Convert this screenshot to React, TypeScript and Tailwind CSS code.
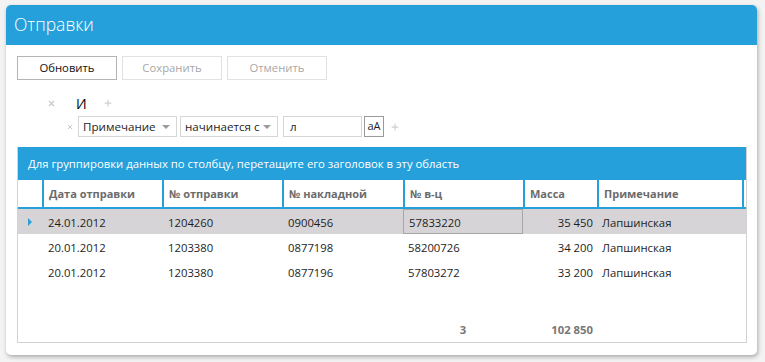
import { Plus, X } from "lucide-react"

const columns = [
  { id: "date", title: "Дата отправки" },
  { id: "num", title: "№ отправки" },
  { id: "invoice", title: "№ накладной" },
  { id: "wagon", title: "№ в-ц" },
  { id: "mass", title: "Масса", right: true },
  { id: "note", title: "Примечание" },
]

const rows = [
  { date: "24.01.2012", num: "1204260", invoice: "0900456", wagon: "57833220", mass: "35 450", note: "Лапшинская" },
  { date: "20.01.2012", num: "1203380", invoice: "0877198", wagon: "58200726", mass: "34 200", note: "Лапшинская" },
  { date: "20.01.2012", num: "1203380", invoice: "0877196", wagon: "57803272", mass: "33 200", note: "Лапшинская" },
]

const gridCols = "grid grid-cols-[24px_120px_120px_121px_120px_74px_145px_1fr]"

function Dropdown({ label, width }: { label: string; width: string }) {
  return (
    <div className={`${width} h-[21px] border border-[#d6d6d6] bg-white flex items-center justify-between pl-[4px] pr-[6px] whitespace-nowrap`}>
      <span>{label}</span>
      <span className="w-0 h-0 border-l-[4px] border-r-[4px] border-t-[4px] border-l-transparent border-r-transparent border-t-[#9a9a9a]" />
    </div>
  )
}

export default function App() {
  return (
    <div className="w-[765px] h-[362px] bg-[#f3f3f3] pt-[5px] pl-[6px] font-['Open_Sans',sans-serif] text-[11.3px] text-[#1e1e1e]">
      <div className="w-[751px] h-[350px] bg-white rounded-[5px] shadow-[1px_2px_4px_rgba(0,0,0,0.3)] overflow-hidden flex flex-col">
        {/* Header */}
        <div className="h-[40px] bg-[#25a0da] text-white text-[17.5px] font-light flex items-center pl-[8px] pb-[1px]">
          Отправки
        </div>

        <div className="flex-1 flex flex-col pl-[11px]">
          {/* Toolbar */}
          <div className="flex gap-[5px] mt-[11px]">
            <button className="w-[100px] h-[24px] border border-[#b4b4b4] bg-white text-[#111]">Обновить</button>
            <button className="w-[100px] h-[24px] border border-[#e2e2e2] bg-white text-[#a8a8a8]">Сохранить</button>
            <button className="w-[100px] h-[24px] border border-[#e2e2e2] bg-white text-[#a8a8a8]">Отменить</button>
          </div>

          {/* Filter */}
          <div className="flex items-center h-[16px] mt-[15px] pl-[30px]">
            <X className="w-[9px] h-[9px] text-[#c8c8c8]" strokeWidth={3} />
            <span className="ml-[20px] text-[14px] font-medium text-black">И</span>
            <Plus className="ml-[16px] w-[10px] h-[10px] text-[#d0d0d0]" strokeWidth={3} />
          </div>
          <div className="flex items-center mt-[5px] pl-[49px] text-[11.6px]">
            <X className="w-[8px] h-[8px] text-[#c8c8c8]" strokeWidth={3} />
            <div className="ml-[4px] flex items-center gap-[3px]">
              <Dropdown label="Примечание" width="w-[99px]" />
              <Dropdown label="начинается с" width="w-[98px]" />
              <div className="ml-[2px] w-[79px] h-[21px] border border-[#d6d6d6] flex items-center pl-[6px]">л</div>
              <div className="ml-[-1px] w-[20px] h-[21px] border border-[#9a9a9a] flex items-center justify-center text-[11px]">аА</div>
              <Plus className="ml-[3px] w-[10px] h-[10px] text-[#d0d0d0]" strokeWidth={3} />
            </div>
          </div>

          {/* Grid */}
          <div className="mt-[10px] w-[730px] h-[196px] border border-[#d2d2d2] border-t-0 flex flex-col">
            <div className="h-[33px] bg-[#25a0da] text-white text-[11.3px] flex items-center pl-[10px] pt-[1px]">
              Для группировки данных по столбцу, перетащите его заголовок в эту область
            </div>
            <div className={`${gridCols} h-[29px] border-b-2 border-[#25a0da]`}>
              <div />
              {columns.map((c) => (
                <div key={c.id} className="border-l-2 border-[#25a0da] flex items-center pl-[5px] pt-[1px] font-bold text-[11px] text-[#6b6b6b]">
                  {c.title}
                </div>
              ))}
              <div className="border-l-2 border-[#25a0da]" />
            </div>
            <div className="flex-1">
              {rows.map((r, i) => (
                <div key={i} className={`${gridCols} h-[25px] ${i === 0 ? "bg-[#d6d4d6]" : ""}`}>
                  <div className="flex items-center pl-[10px] pt-[1px]">
                    {i === 0 && (
                      <span className="w-0 h-0 border-t-[4px] border-b-[4px] border-l-[4px] border-t-transparent border-b-transparent border-l-[#2a9fd8]" />
                    )}
                  </div>
                  <div className="flex items-center pl-[6px] pt-[4px]">{r.date}</div>
                  <div className="flex items-center pl-[6px] pt-[4px]">{r.num}</div>
                  <div className="flex items-center pl-[6px] pt-[4px]">{r.invoice}</div>
                  <div className={`flex items-center pl-[5px] pt-[4px] ${i === 0 ? "border border-[#a6a6a6]" : ""}`}>{r.wagon}</div>
                  <div className="flex items-center justify-end pr-[4px] pt-[4px]">{r.mass}</div>
                  <div className="flex items-center pl-[5px] pt-[4px]">{r.note}</div>
                  <div />
                </div>
              ))}
            </div>
            <div className={`${gridCols} h-[26px] font-bold text-[#777]`}>
              <div />
              <div />
              <div />
              <div />
              <div className="flex items-center justify-center pt-[2px]">3</div>
              <div className="flex items-center justify-end pr-[4px] pt-[2px]">102 850</div>
              <div />
              <div />
            </div>
          </div>
        </div>
      </div>
    </div>
  )
}
